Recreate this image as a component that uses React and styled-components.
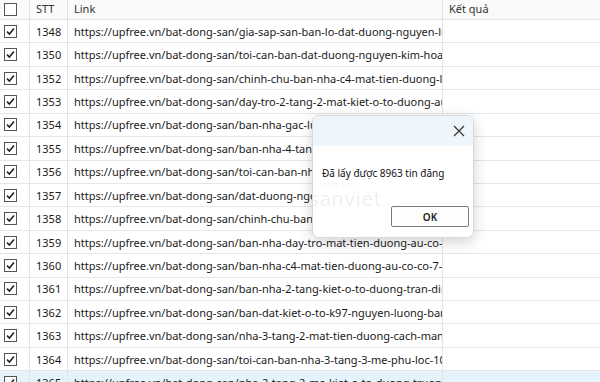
import React from "react";
import styled, { createGlobalStyle } from "styled-components";

const Global = createGlobalStyle`
  html, body { margin: 0; padding: 0; background: #fff; }
  body { font-family: "Noto Sans", "Open Sans", sans-serif; overflow: hidden; }
`;

const rows = [
  ["1348", "gia-sap-san-ban-lo-dat-duong-nguyen-luong-bang-lien-chieu"],
  ["1350", "toi-can-ban-dat-duong-nguyen-kim-hoang-hai-chau"],
  ["1352", "chinh-chu-ban-nha-c4-mat-tien-duong-le-do"],
  ["1353", "day-tro-2-tang-2-mat-kiet-o-to-duong-au-co"],
  ["1354", "ban-nha-gac-lung-kiet-o-to-duong-ton-dan"],
  ["1355", "ban-nha-4-tang-mat-tien-duong-nguyen-tri-phuong"],
  ["1356", "toi-can-ban-nha-kiet-o-to-duong-ham-nghi"],
  ["1357", "dat-duong-ngo-thi-nham-lien-chieu-da-nang"],
  ["1358", "chinh-chu-ban-nha-kiet-duong-le-duan"],
  ["1359", "ban-nha-day-tro-mat-tien-duong-au-co-lien-chieu"],
  ["1360", "ban-nha-c4-mat-tien-duong-au-co-co-7-phong"],
  ["1361", "ban-nha-2-tang-kiet-o-to-duong-tran-dinh-tri"],
  ["1362", "ban-dat-kiet-o-to-k97-nguyen-luong-bang"],
  ["1363", "nha-3-tang-2-mat-tien-duong-cach-mang-thang-8"],
  ["1364", "toi-can-ban-nha-3-tang-3-me-phu-loc-10"],
  ["1365", "nha-2-tang-2-me-kiet-o-to-duong-truong-chinh"],
];

function Check({ checked }) {
  return (
    <Box>
      {checked && (
        <svg width="11" height="11" viewBox="0 0 11 11">
          <path d="M2 5.6 L4.4 8 L9 2.6" fill="none" stroke="#222" strokeWidth="1.6" />
        </svg>
      )}
    </Box>
  );
}

export default function App() {
  return (
    <>
      <Global />
      <Page>
        <Grid>
          <Header>
            <Cell><Check /></Cell>
            <HeadCell>STT</HeadCell>
            <HeadCell>Link</HeadCell>
            <HeadCell>Kết quả</HeadCell>
          </Header>
          {rows.map(([n, slug], i) => (
            <Row key={n} selected={i === rows.length - 1}>
              <Cell><Check checked /></Cell>
              <Cell>{n}</Cell>
              <Cell>https://upfree.vn/bat-dong-san/{slug}</Cell>
              <Cell />
            </Row>
          ))}
        </Grid>
        <Dialog>
          <TitleBar>
            <Close>
              <svg width="12" height="12" viewBox="0 0 12 12">
                <path d="M1 1 L11 11 M11 1 L1 11" stroke="#333" strokeWidth="1.2" />
              </svg>
            </Close>
          </TitleBar>
          <Body>
            <Message>Đã lấy được 8963 tin đăng</Message>
            <Watermark>
              <small>.com.vn</small>
              <span>sanviet</span>
            </Watermark>
            <Footer>
              <OkButton>OK</OkButton>
            </Footer>
          </Body>
        </Dialog>
      </Page>
    </>
  );
}

const Page = styled.div`
  position: relative;
  width: 600px;
  height: 382px;
  overflow: hidden;
`;

const Grid = styled.div`
  display: flex;
  flex-direction: column;
  font-size: 11px;
  color: #1a1a1a;
`;

const columns = "30px 38px 375px 1fr";

const Header = styled.div`
  display: grid;
  grid-template-columns: ${columns};
  height: 20px;
  background: #fafafa;
  border-bottom: 1px solid #e3e3e3;
  box-sizing: border-box;
`;

const Row = styled.div`
  display: grid;
  grid-template-columns: ${columns};
  height: 23.43px;
  box-sizing: border-box;
  border-bottom: 1px solid #e6e6e6;
  background: ${(p) => (p.selected ? "#e5f3fb" : "#fff")};
`;

const Cell = styled.div`
  display: flex;
  align-items: center;
  padding-left: 6px;
  white-space: nowrap;
  overflow: hidden;
  border-right: 1px solid #e3e3e3;
  &:first-child { padding-left: 4px; }
  &:last-child { border-right: none; }
`;

const HeadCell = styled(Cell)`
  color: #333;
  padding-bottom: 2px;
`;

const Box = styled.div`
  width: 13px;
  height: 13px;
  box-sizing: border-box;
  border: 1px solid #555;
  background: #fff;
  display: flex;
  align-items: center;
  justify-content: center;
`;

const Dialog = styled.div`
  position: absolute;
  left: 312px;
  top: 115px;
  width: 162px;
  height: 123px;
  border-radius: 7px;
  border: 1px solid #d6dbe0;
  box-sizing: border-box;
  background: #fff;
  box-shadow: 0 4px 14px rgba(0, 0, 0, 0.18);
  overflow: hidden;
  display: flex;
  flex-direction: column;
`;

const TitleBar = styled.div`
  height: 30px;
  background: #eef5fb;
  display: flex;
  justify-content: flex-end;
  align-items: center;
  padding-right: 7px;
`;

const Close = styled.div`
  width: 14px;
  height: 14px;
  display: flex;
  align-items: center;
  justify-content: center;
`;

const Body = styled.div`
  position: relative;
  flex: 1;
  display: flex;
  flex-direction: column;
  padding: 20px 0 0 9px;
`;

const Message = styled.div`
  font-size: 10px;
  color: #111;
  white-space: nowrap;
`;

const Watermark = styled.div`
  position: absolute;
  left: -4px;
  top: 36px;
  display: flex;
  flex-direction: column;
  color: rgba(0, 0, 0, 0.08);
  font-family: "DejaVu Sans", sans-serif;
  line-height: 1;
  small { font-size: 8px; padding-left: 10px; }
  span { font-size: 19px; letter-spacing: 0.5px; }
`;

const Footer = styled.div`
  margin-top: auto;
  display: flex;
  justify-content: flex-end;
  padding: 0 4px 10px 0;
`;

const OkButton = styled.button`
  width: 78px;
  height: 21px;
  font-family: "Noto Sans", sans-serif;
  font-size: 10px;
  font-weight: 600;
  color: #222;
  background: #fdfdfd;
  border: 1px solid #7a7a7a;
  border-radius: 2px;
  padding: 0;
`;
